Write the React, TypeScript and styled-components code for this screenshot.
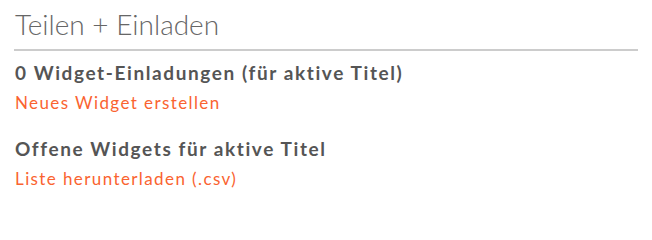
import styled, {createGlobalStyle} from 'styled-components'

const GlobalStyle = createGlobalStyle`
  body {
    margin: 0;
    background: #fff;
    font-family: Lato, "Open Sans", sans-serif;
  }
`

export default function App() {
  return (
    <>
      <GlobalStyle />
      <Panel>
        <Title>Teilen + Einladen</Title>
        <Section>
          <SectionTitle>0 Widget-Einladungen (für aktive Titel)</SectionTitle>
          <ActionLink href="#">Neues Widget erstellen</ActionLink>
        </Section>
        <Section>
          <SectionTitle>Offene Widgets für aktive Titel</SectionTitle>
          <ActionLink href="#">Liste herunterladen (.csv)</ActionLink>
        </Section>
      </Panel>
    </>
  )
}

const Panel = styled.div`
  padding: 8px 14px 0 14px;
`

const Title = styled.h2`
  margin: 0;
  padding: 0 0 8px 1px;
  font-size: 28px;
  font-weight: 300;
  line-height: 33px;
  color: #666;
  border-bottom: 2px solid #ccc;
`

const Section = styled.div`
  display: flex;
  flex-direction: column;
  align-items: flex-start;
  padding: 10px 0 0 1px;
  margin-bottom: 14px;
`

const SectionTitle = styled.h3`
  margin: 0;
  font-size: 19px;
  font-weight: 700;
  line-height: 24px;
  letter-spacing: 1.6px;
  color: #555;
`

const ActionLink = styled.a`
  margin-top: 8px;
  font-size: 17px;
  line-height: 20px;
  letter-spacing: 1.4px;
  color: #fa6330;
  text-decoration: none;
`
